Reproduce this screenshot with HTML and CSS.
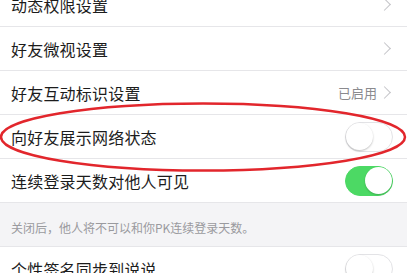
FILE: index.html
```html
<!DOCTYPE html>
<html lang="zh">
<head>
<meta charset="utf-8">
<link rel="stylesheet" href="styles.css">
</head>
<body>
<div class="screen">
  <div class="list">
    <div class="row"><span class="label">动态权限设置</span><span class="chev"></span></div>
    <div class="row"><span class="label">好友微视设置</span><span class="chev"></span></div>
    <div class="row"><span class="label">好友互动标识设置</span><span class="right"><span class="value">已启用</span><span class="chev"></span></span></div>
    <div class="row"><span class="label">向好友展示网络状态</span><span class="switch"><span class="knob"></span></span></div>
    <div class="row"><span class="label">连续登录天数对他人可见</span><span class="switch on"><span class="knob"></span></span></div>
    <div class="note">关闭后，他人将不可以和你PK连续登录天数。</div>
    <div class="row"><span class="label">个性签名同步到说说</span><span class="switch"><span class="knob"></span></span></div>
  </div>
  <svg class="mark" width="407" height="273" viewBox="0 0 407 273">
    <ellipse cx="203" cy="137" rx="202" ry="33.5" fill="none" stroke="#e2262c" stroke-width="2.5"/>
  </svg>
</div>
</body>
</html>
```
FILE: styles.css
```css
html, body {
  margin: 0;
  padding: 0;
  background: #f4f4f6;
}
.screen {
  position: relative;
  width: 407px;
  height: 273px;
  overflow: hidden;
  font-family: "Noto Sans CJK SC", "Noto Sans", sans-serif;
}
.list {
  margin-top: -17px;
  display: flex;
  flex-direction: column;
}
.row {
  height: 43px;
  border-bottom: 1px solid #e6e6e9;
  background: #fff;
  display: flex;
  align-items: center;
  justify-content: space-between;
  padding: 0 14px 0 11px;
}
.label {
  font-size: 16px;
  color: #1c1c1c;
  letter-spacing: 0.2px;
}
.right {
  display: flex;
  align-items: center;
  gap: 3px;
}
.value {
  font-size: 13px;
  color: #8a8a8e;
}
.chev {
  width: 8px;
  height: 8px;
  border-top: 1.3px solid #c4c4c8;
  border-right: 1.3px solid #c4c4c8;
  transform: rotate(45deg);
  margin-right: 4px;
}
.switch {
  position: relative;
  width: 48px;
  height: 30px;
  box-sizing: border-box;
  border-radius: 15px;
  border: 1.5px solid #e3e3e6;
  background: #fff;
}
.switch .knob {
  position: absolute;
  left: 0;
  top: 0;
  width: 27px;
  height: 27px;
  border-radius: 50%;
  background: #fff;
  box-shadow: 0 1px 2px rgba(0,0,0,0.25);
}
.switch.on {
  background: #4cd964;
  border-color: #4cd964;
}
.switch.on .knob {
  left: auto;
  right: 0;
  box-shadow: 0 1px 2px rgba(0,0,0,0.2);
}
.note {
  height: 44px;
  box-sizing: border-box;
  padding: 5px 11px 0;
  display: flex;
  align-items: center;
  font-size: 12px;
  color: #9a9a9e;
  border-bottom: 1px solid #e6e6e9;
}
.mark {
  position: absolute;
  left: 0;
  top: 0;
  pointer-events: none;
}
```
